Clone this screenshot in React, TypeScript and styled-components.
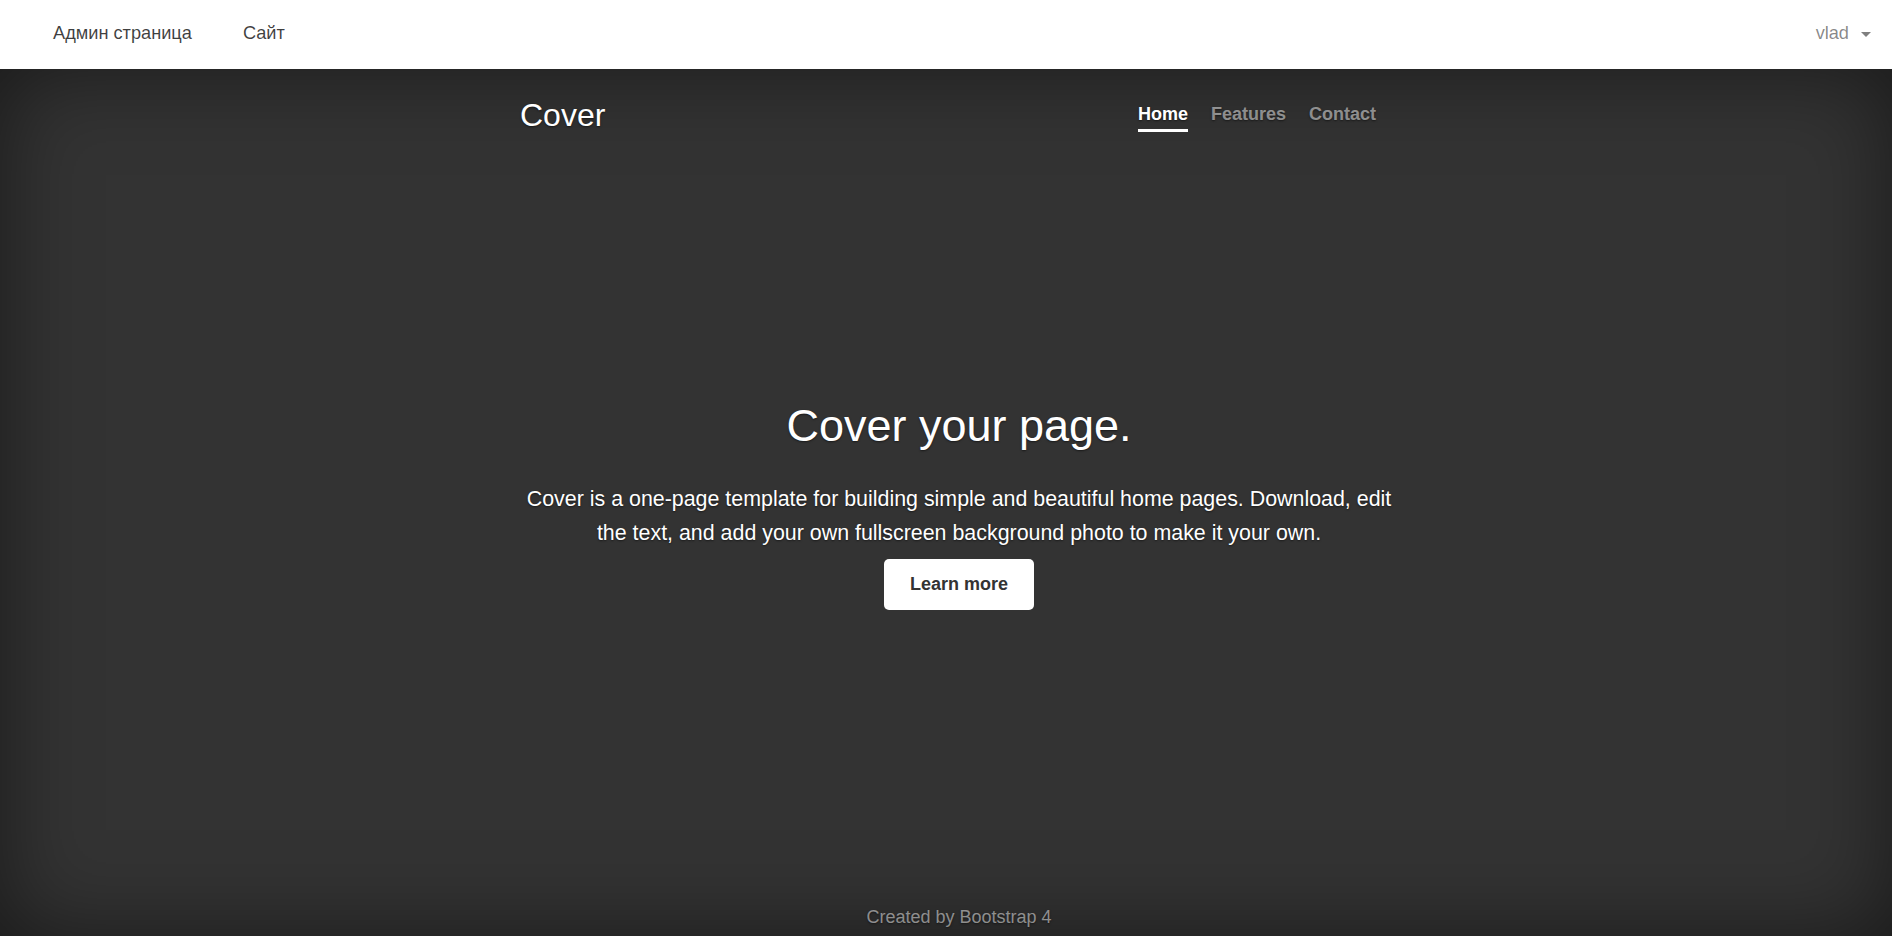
import styled, { createGlobalStyle } from 'styled-components';

const GlobalStyle = createGlobalStyle`
  html, body {
    margin: 0;
    padding: 0;
    background-color: #333;
  }
  body {
    font-family: "Liberation Sans", Arial, sans-serif;
  }
  * {
    box-sizing: border-box;
  }
`;

const TopBar = styled.header`
  height: 69px;
  background-color: #fff;
  display: flex;
  align-items: center;
  padding: 0 21px 2px 53px;
  font-size: 18.2px;
`;

const TopLinks = styled.nav`
  display: flex;
  gap: 51px;
`;

const TopLink = styled.a`
  color: rgba(0, 0, 0, 0.75);
  text-decoration: none;
  cursor: pointer;
`;

const UserMenu = styled.div`
  margin-left: auto;
  display: flex;
  align-items: center;
  gap: 12px;
  color: rgba(0, 0, 0, 0.48);
  cursor: pointer;
`;

const Caret = styled.span`
  width: 0;
  height: 0;
  border-left: 5px solid transparent;
  border-right: 5px solid transparent;
  border-top: 5px solid rgba(0, 0, 0, 0.5);
  margin-top: 1px;
`;

const CoverArea = styled.div`
  min-height: calc(100vh - 69px);
  background-color: #333;
  box-shadow: inset 0 0 88px rgba(0, 0, 0, 0.5);
  color: #fff;
  text-shadow: 0 1px 2px rgba(0, 0, 0, 0.5);
  display: flex;
`;

const Container = styled.div`
  width: 904px;
  margin: 0 auto;
  padding: 28px 0 5px 26px;
  display: flex;
  flex-direction: column;
`;

const Masthead = styled.div`
  display: flex;
  justify-content: space-between;
  align-items: flex-start;
  padding-right: 22px;
`;

const Brand = styled.h3`
  margin: 0;
  font-size: 32px;
  font-weight: 400;
  line-height: 37px;
`;

const Nav = styled.nav`
  display: flex;
  gap: 23px;
  margin-top: 4px;
`;

const NavLink = styled.a<{ active?: boolean }>`
  font-size: 18px;
  font-weight: 700;
  line-height: 27px;
  padding-bottom: 1px;
  color: ${({ active }) => (active ? '#fff' : 'rgba(255, 255, 255, 0.5)')};
  border-bottom: 3px solid ${({ active }) => (active ? '#fff' : 'transparent')};
  text-decoration: none;
  cursor: pointer;
`;

const Main = styled.main`
  padding-top: 265px;
  text-align: center;
`;

const Heading = styled.h1`
  margin: 0 0 30px;
  font-size: 45px;
  font-weight: 400;
  line-height: 53px;
`;

const Lead = styled.p`
  margin: 0 0 9px;
  font-size: 21.4px;
  line-height: 34px;
`;

const Button = styled.a`
  display: inline-block;
  background-color: #fff;
  color: #333;
  text-shadow: none;
  font-size: 18px;
  font-weight: 700;
  line-height: 27px;
  padding: 12px 26px;
  border-radius: 5px;
  text-decoration: none;
  cursor: pointer;
`;

const Footer = styled.footer`
  margin-top: auto;
  text-align: center;
  font-size: 18px;
  line-height: 27px;
  color: rgba(255, 255, 255, 0.5);
`;

const App = () => {
  return (
    <>
      <GlobalStyle />
      <TopBar>
        <TopLinks>
          <TopLink>Админ страница</TopLink>
          <TopLink>Сайт</TopLink>
        </TopLinks>
        <UserMenu>
          <span>vlad</span>
          <Caret />
        </UserMenu>
      </TopBar>
      <CoverArea>
        <Container>
          <Masthead>
            <Brand>Cover</Brand>
            <Nav>
              <NavLink active>Home</NavLink>
              <NavLink>Features</NavLink>
              <NavLink>Contact</NavLink>
            </Nav>
          </Masthead>
          <Main>
            <Heading>Cover your page.</Heading>
            <Lead>
              Cover is a one-page template for building simple and beautiful home pages. Download,
              edit the text, and add your own fullscreen background photo to make it your own.
            </Lead>
            <Button>Learn more</Button>
          </Main>
          <Footer>Created by Bootstrap 4</Footer>
        </Container>
      </CoverArea>
    </>
  );
};

export default App;
